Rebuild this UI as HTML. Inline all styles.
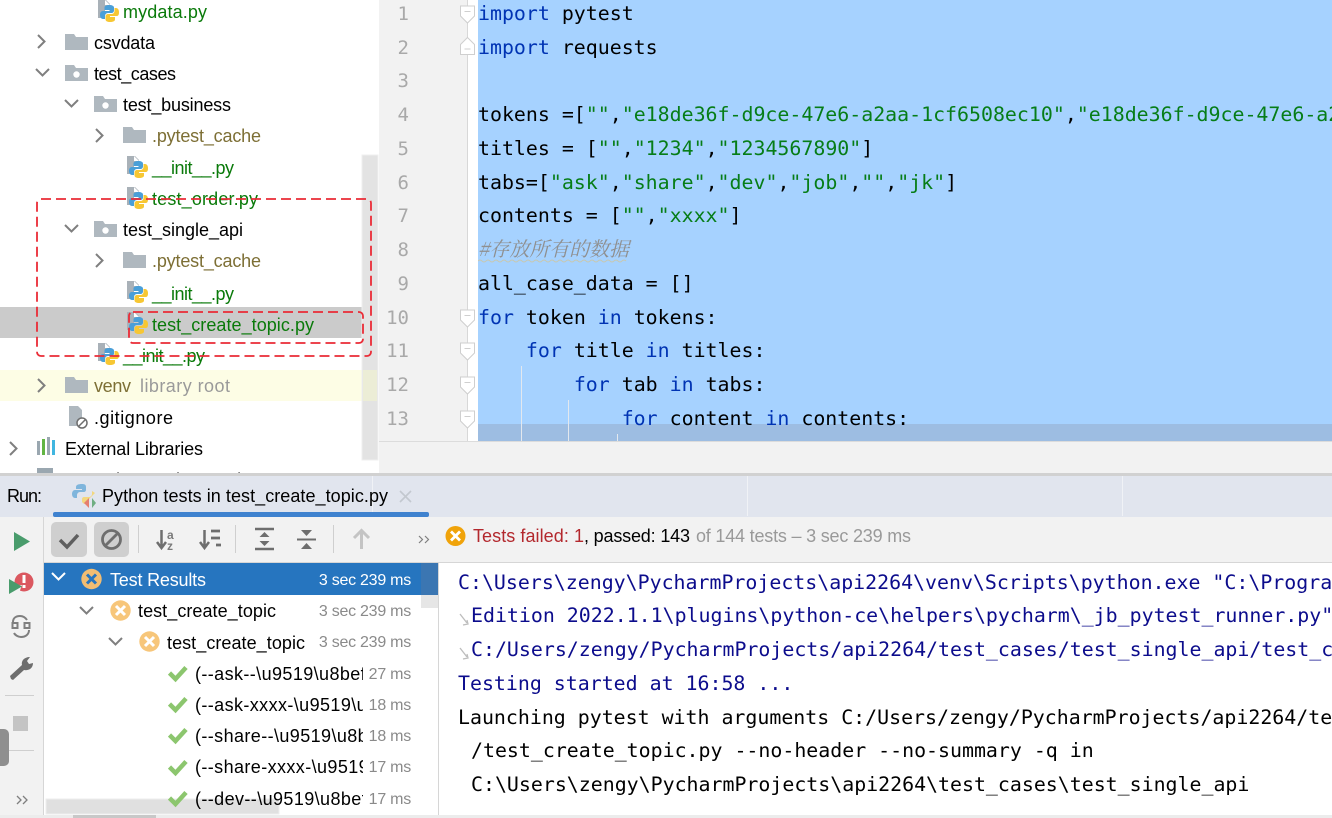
<!DOCTYPE html>
<html><head><meta charset="utf-8"><style>
html,body{margin:0;padding:0;background:#fff;overflow:hidden}
svg{display:block}
.s{font-family:"Liberation Sans","Noto Sans CJK SC",sans-serif;font-size:18px}
.m{font-family:"DejaVu Sans Mono","Liberation Mono",monospace;font-size:19.9px;white-space:pre}
.g{fill:#0a7a0a}.k{fill:#000}.o{fill:#7d6f35}.c{fill:#0033b3}.t{fill:#067d17}
.n{fill:#a9a9a9;font-family:"DejaVu Sans Mono",monospace;font-size:19px;text-anchor:end}
.d{fill:#8a8a8a;font-size:16px;letter-spacing:-.25px;text-anchor:end}
.nm{letter-spacing:.4px}
.con{fill:#0c0c8c}
</style></head><body>
<svg width="1332" height="818" viewBox="0 0 1332 818" xmlns="http://www.w3.org/2000/svg">
<defs>
<g id="py"><path d="M3 3h8l4 4v5h-5v9H3z" fill="#a9b1b8"/><path d="M10 3l5 5h-5z" fill="#fff"/>
<path d="M14.500 8c-3 0-5 .8-5 2.500V13h5v1H8c-2 0-3 1.500-3 3.800S6 22 8 22h2v-3c0-1.500 1.300-3 3-3h3.500c1.300 0 2.500-1 2.500-2.500v-3C19 9 17 8 14.500 8z" fill="#4a9fd8"/>
<path d="M15 25c3 0 5-.8 5-2.500V20h-5v-1h6.500c2 0 2.500-1.500 2.500-3.800S23 11 21 11h-1.500v3c0 1.500-1.300 3-3 3H13c-1.300 0-2.500 1-2.500 2.500v3c0 1.500 2 2.500 4.500 2.500z" fill="#f7c733"/></g>
<path id="fo" d="M0 18V2h9l2 3h12v13z" fill="#afb8bf"/>
<g id="fd"><use href="#fo"/><circle cx="11.500" cy="11.500" r="3.200" fill="#fff"/></g>
<path id="cr" d="M0 0l6.500 6.500L0 13" fill="none" stroke="#7f7f7f" stroke-width="2"/>
<path id="cd" d="M0 0l6.500 6.500L13 0" fill="none" stroke="#7f7f7f" stroke-width="2"/>
<g id="ok"><path d="M1.500 9l6 6L18 3.500" fill="none" stroke="#8cc66e" stroke-width="4.500"/></g>
<g id="fl"><path d="M0 0h14v10l-7 7-7-7z" fill="#fff" stroke="#cfcfcf"/><path d="M4 5.500h6" stroke="#cfcfcf"/></g>
<g id="fu"><path d="M0 17h14V7l-7-7-7 7z" fill="#fff" stroke="#cfcfcf"/><path d="M4 11.500h6" stroke="#cfcfcf"/></g>
<g id="wf"><circle cx="10.500" cy="10.500" r="10.200" fill="#f7c67a"/><path d="M6 6l9 9M15 6l-9 9" stroke="#fff" stroke-width="3"/></g>
<clipPath id="cTree"><rect x="0" y="0" width="378" height="473"/></clipPath>
<clipPath id="cCode"><rect x="478" y="0" width="854" height="441"/></clipPath>
<clipPath id="cName"><rect x="44" y="600" width="319" height="214"/></clipPath>
<clipPath id="cCon"><rect x="440" y="563" width="892" height="252"/></clipPath>
</defs>

<rect width="1332" height="818" fill="#fff"/>
<!-- project tree -->
<rect x="0" y="307" width="362" height="31" fill="#cbcbcb"/>
<rect x="0" y="370" width="377" height="31" fill="#fdfde5"/>
<rect x="362" y="155" width="16" height="305" fill="#e3e3e3" stroke="#efefef"/>
<rect x="363" y="370" width="14" height="31" fill="#ecedd6"/>
<g clip-path="url(#cTree)">
<use href="#py" x="95" y="-3"/><text class="s g" x="123" y="18" textLength="84">mydata.py</text>
<use href="#cr" x="38" y="35"/><use href="#fo" x="65" y="32"/><text class="s k" x="94" y="49" textLength="61">csvdata</text>
<use href="#cd" x="36" y="69"/><use href="#fd" x="65" y="63"/><text class="s k" x="94" y="80" textLength="82">test_cases</text>
<use href="#cd" x="65" y="100"/><use href="#fd" x="94" y="94"/><text class="s k" x="123" y="111" textLength="108">test_business</text>
<use href="#cr" x="96" y="129"/><use href="#fo" x="123" y="125"/><text class="s o" x="152" y="142" textLength="109">.pytest_cache</text>
<use href="#py" x="124" y="153"/><text class="s g" x="152" y="174" textLength="82">__init__.py</text>
<use href="#py" x="124" y="184"/><text class="s g" x="152" y="205" textLength="106">test_order.py</text>
<use href="#cd" x="65" y="225"/><use href="#fd" x="94" y="219"/><text class="s k" x="123" y="236" textLength="120">test_single_api</text>
<use href="#cr" x="96" y="254"/><use href="#fo" x="123" y="250"/><text class="s o" x="152" y="267" textLength="109">.pytest_cache</text>
<use href="#py" x="124" y="278"/><text class="s g" x="152" y="300" textLength="82">__init__.py</text>
<use href="#py" x="124" y="309"/><text class="s g" x="152" y="331" textLength="162">test_create_topic.py</text>
<use href="#py" x="95" y="340"/><text class="s g" x="123" y="362" textLength="82">__init__.py</text>
<use href="#cr" x="38" y="379"/><use href="#fo" x="65" y="375"/><text class="s o" x="94" y="392" textLength="37">venv</text><text class="s" fill="#9a9a9a" x="140" y="392" textLength="90">library root</text>
<path d="M69 406h9l4 4v16H69z" fill="#afb8bf"/><circle cx="82" cy="423" r="5" fill="#fff" stroke="#6e6e6e" stroke-width="1.500"/><path d="M79 426l6-6" stroke="#6e6e6e" stroke-width="1.500"/><text class="s k" x="94" y="424" textLength="79">.gitignore</text>
<use href="#cr" x="10" y="442"/><rect x="37" y="441" width="3" height="14" fill="#9aa7b0"/><rect x="42" y="439" width="3" height="16" fill="#62b543"/><rect x="47" y="437" width="3" height="18" fill="#9aa7b0"/><rect x="52" y="440" width="3" height="15" fill="#40b6e0"/><text class="s k" x="65" y="455" textLength="138">External Libraries</text>
<rect x="37" y="468" width="16" height="12" fill="#9aa7b0"/><text class="s k" x="65" y="486">Scratches and Consoles</text>
</g>
<rect x="37" y="199" width="334" height="157" rx="4" fill="none" stroke="#ea2b36" stroke-width="1.800" stroke-dasharray="10 5"/>
<rect x="129" y="312" width="234" height="31" rx="4" fill="none" stroke="#ea2b36" stroke-width="1.800" stroke-dasharray="10 5"/>

<!-- editor -->
<rect x="379" y="0" width="88" height="473" fill="#f2f2f2"/>
<rect x="379" y="441" width="953" height="32" fill="#f2f2f2"/>
<rect x="467" y="0" width="1" height="441" fill="#d8d8d8"/>
<rect x="478" y="0" width="854" height="424" fill="#a6d2ff"/>
<rect x="478" y="424" width="854" height="17" fill="#9dbde2"/>
<rect x="379" y="441" width="953" height="1" fill="#dcdcdc"/>
<path d="M521.500 366V441M568.500 400V441M617.500 434V441" stroke="#e3e8ee" fill="none"/>
<use href="#fl" x="460.500" y="6"/><use href="#fu" x="460.500" y="37.500"/>
<use href="#fl" x="460.500" y="310"/><use href="#fl" x="460.500" y="343"/><use href="#fl" x="460.500" y="377"/><use href="#fl" x="460.500" y="411"/>
<text class="n" x="409" y="20">1</text><text class="n" x="409" y="54">2</text><text class="n" x="409" y="87">3</text><text class="n" x="409" y="121">4</text><text class="n" x="409" y="155">5</text><text class="n" x="409" y="189">6</text><text class="n" x="409" y="222">7</text><text class="n" x="409" y="256">8</text><text class="n" x="409" y="290">9</text><text class="n" x="409" y="324">10</text><text class="n" x="409" y="357">11</text><text class="n" x="409" y="391">12</text><text class="n" x="409" y="425">13</text>
<g clip-path="url(#cCode)">
<text class="m k" x="478" y="20"><tspan class="c">import</tspan> pytest</text>
<text class="m k" x="478" y="54"><tspan class="c">import</tspan> requests</text>
<text class="m k" x="478" y="121">tokens =[<tspan class="t">""</tspan>,<tspan class="t">"e18de36f-d9ce-47e6-a2aa-1cf6508ec10"</tspan>,<tspan class="t">"e18de36f-d9ce-47e6-a2aa-1cf6508ec10"</tspan></text>
<text class="m k" x="478" y="155">titles = [<tspan class="t">""</tspan>,<tspan class="t">"1234"</tspan>,<tspan class="t">"1234567890"</tspan>]</text>
<text class="m k" x="478" y="189">tabs=[<tspan class="t">"ask"</tspan>,<tspan class="t">"share"</tspan>,<tspan class="t">"dev"</tspan>,<tspan class="t">"job"</tspan>,<tspan class="t">""</tspan>,<tspan class="t">"jk"</tspan>]</text>
<text class="m k" x="478" y="222">contents = [<tspan class="t">""</tspan>,<tspan class="t">"xxxx"</tspan>]</text>
<text x="478" y="256" fill="#8f8f8f" font-style="italic" font-size="20" font-family="'Noto Serif CJK SC','Noto Sans CJK SC',serif" textLength="151">#存放所有的数据</text>
<path d="M478 261q2 -2 4 0t4 0 4 0 4 0 4 0 4 0 4 0 4 0 4 0 4 0 4 0 4 0 4 0 4 0 4 0 4 0 4 0 4 0 4 0 4 0 4 0 4 0 4 0 4 0 4 0 4 0 4 0 4 0 4 0 4 0 4 0 4 0 4 0 4 0 4 0 4 0 4 0" fill="none" stroke="#c8c8b0" stroke-width=".9"/>
<text class="m k" x="478" y="290">all_case_data = []</text>
<text class="m k" x="478" y="324"><tspan class="c">for</tspan> token <tspan class="c">in</tspan> tokens:</text>
<text class="m k" x="478" y="357">    <tspan class="c">for</tspan> title <tspan class="c">in</tspan> titles:</text>
<text class="m k" x="478" y="391">        <tspan class="c">for</tspan> tab <tspan class="c">in</tspan> tabs:</text>
<text class="m k" x="478" y="425">            <tspan class="c">for</tspan> content <tspan class="c">in</tspan> contents:</text>
</g>

<!-- run tab bar -->
<rect x="0" y="473" width="1332" height="3" fill="#d1d1d1"/>
<rect x="0" y="476" width="1332" height="41" fill="#e1e5ee"/>
<path d="M372.500 476V512M747.500 476V516M1122.500 476V516" stroke="#f0f2f6"/>
<rect x="53" y="512" width="376" height="5" rx="2" fill="#3f82cf"/>
<text class="s k" x="7" y="502" textLength="35">Run:</text>
<path d="M82 484c-4 0-6 1-6 3v2h6v1h-7c-2 0-3 2-3 4s1 4 3 4h2v-3c0-1 1-3 3-3h4c1 0 2-1 2-2v-3c0-2-1-3-4-3z" fill="#7fb5dc"/><path d="M92 491v3c0 2-2 3-3 3h-5c-1 0-2 1-2 2v2c0 2 2 3 4 3l4-6 5-5z" fill="#f3d77e"/><path d="M84 503l5-5v10z" fill="#e57f70"/><path d="M92 498l4 5-4 5z" fill="#6fae82"/>
<text class="s k" x="102" y="502" textLength="286">Python tests in test_create_topic.py</text>
<path d="M400 491l11 11M411 491l-11 11" stroke="#c3c8cf" stroke-width="1.600"/>

<!-- left toolbar + toolbar -->
<rect x="0" y="517" width="44" height="298" fill="#f2f2f2"/>
<rect x="44" y="517" width="1288" height="46" fill="#f2f2f2"/>
<rect x="43" y="517" width="1" height="298" fill="#d6d6d6"/>
<rect x="440" y="562" width="892" height="1" fill="#d6d6d6"/>
<rect x="44" y="562" width="396" height="1" fill="#d6d6d6"/>
<path d="M14 532l16 9.500-16 9.500z" fill="#499c6c"/>
<circle cx="24" cy="582" r="9.500" fill="#db5860"/><rect x="22.500" y="575" width="3" height="8" fill="#fff"/><rect x="22.500" y="585" width="3" height="3" fill="#fff"/><path d="M13 586l9-1-3 8z" fill="#f2f2f2"/><path d="M9 579l13 7.500-13 7.500z" fill="#499c6c"/>
<g fill="none" stroke="#7f7f7f" stroke-width="2"><path d="M13 622c0-4 3-6 7-6 3 0 5 1 7 4"/><path d="M29 630c0 4-3 7-8 7-3 0-6-2-7-4"/><rect x="12.500" y="623" width="5" height="5"/><rect x="24.500" y="623" width="5" height="5"/></g>
<path d="M11 679l-1-3 12-11c-1-4 2-8 8-8l-3 4 2 3 4-1c0 5-4 8-9 7l-11 10z" fill="#6e6e6e"/>
<rect x="5" y="695" width="29" height="1" fill="#cfcfcf"/>
<rect x="13" y="716" width="15" height="15" fill="#c4c4c4"/>
<rect x="5" y="750" width="29" height="1" fill="#cfcfcf"/>
<rect x="-6" y="729" width="15" height="37" rx="5" fill="#8f8f8f"/>
<path d="M17 796l4 4-4 4M23 796l4 4-4 4" fill="none" stroke="#7f7f7f" stroke-width="1.300"/>

<rect x="51" y="522" width="36" height="35" rx="5" fill="#cfcfcf"/>
<rect x="94" y="522" width="35" height="35" rx="5" fill="#cfcfcf"/>
<path d="M60 540l7 7 11-12" fill="none" stroke="#5f5f5f" stroke-width="3.500"/>
<circle cx="111.500" cy="539.500" r="9" fill="none" stroke="#6e6e6e" stroke-width="2.800"/><path d="M105 546l13-13" stroke="#6e6e6e" stroke-width="2.800"/>
<rect x="138" y="525" width="1" height="28" fill="#cfcfcf"/>
<path d="M161.500 530v17M157 542l4.500 6 4.500-6" fill="none" stroke="#6e6e6e" stroke-width="2.500"/>
<text x="167" y="539" font-size="12" font-weight="bold" fill="#7a7a7a" font-family="Liberation Sans,sans-serif">a</text><text x="167" y="550" font-size="12" font-weight="bold" fill="#7a7a7a" font-family="Liberation Sans,sans-serif">z</text>
<path d="M204.500 530v17M200 542l4.500 6 4.500-6" fill="none" stroke="#6e6e6e" stroke-width="2.500"/>
<path d="M211 531h9M211 538h9M216 545h5" stroke="#6e6e6e" stroke-width="2.800"/>
<rect x="235" y="525" width="1" height="28" fill="#cfcfcf"/>
<path d="M255 529h19M255 549h19" stroke="#6e6e6e" stroke-width="2.500"/><path d="M264.500 532l5 5h-10zM264.500 546l5-5h-10z" fill="#6e6e6e"/>
<path d="M297 539.500h19" stroke="#6e6e6e" stroke-width="2"/><path d="M301 530h11l-5.500 6zM301 549h11l-5.500-6z" fill="#6e6e6e"/>
<rect x="333" y="525" width="1" height="28" fill="#cfcfcf"/>
<path d="M361.500 549v-18M354 538l7.500-7.500L369 538" fill="none" stroke="#c4c4c4" stroke-width="3"/>
<path d="M419 536l3.500 3.500-3.500 3.500M425 536l3.500 3.500-3.500 3.500" fill="none" stroke="#7f7f7f" stroke-width="1.200"/>

<!-- status -->
<circle cx="455.500" cy="536" r="10" fill="#f0a30a"/><path d="M451 531.500l9 9M460 531.500l-9 9" stroke="#fff" stroke-width="2.800"/>
<text class="s" x="473" y="542" fill="#b3282d" textLength="111">Tests failed: 1</text>
<text class="s k" x="584" y="542" textLength="106">, passed: 143</text>
<text class="s" x="696" y="542" fill="#999" textLength="215">of 144 tests – 3 sec 239 ms</text>

<!-- test tree -->
<rect x="44" y="563" width="394" height="32" fill="#2675bf"/>
<rect x="421" y="563" width="17" height="32" fill="#3b76b2"/>
<rect x="421" y="595" width="17" height="13" fill="#e6e6e6"/>
<path d="M52 573l6.500 6.500L65 573" fill="none" stroke="#fff" stroke-width="2"/>
<circle cx="91.500" cy="579" r="10.200" fill="#f2bd72"/><path d="M87 574.500l9 9M96 574.500l-9 9" stroke="#2675bf" stroke-width="3"/>
<text class="s" fill="#fff" x="110" y="586" textLength="96">Test Results</text><text class="s d" style="fill:#fff" x="411" y="585">3 sec 239 ms</text>
<use href="#cd" x="80" y="607"/><use href="#wf" x="110" y="600"/><text class="s k" x="138" y="617" textLength="138">test_create_topic</text><text class="s d" x="411" y="616">3 sec 239 ms</text>
<use href="#cd" x="109" y="638"/><use href="#wf" x="139" y="631"/><text class="s k" x="167" y="649" textLength="138">test_create_topic</text><text class="s d" x="411" y="647">3 sec 239 ms</text>
<rect x="46" y="799" width="233" height="15" fill="#e0e0e0" stroke="#eee"/>
<g clip-path="url(#cName)">
<text class="s k nm" x="195" y="680">(--ask--\u9519\u8bef\u8bef\u8bef</text>
<text class="s k nm" x="195" y="711">(--ask-xxxx-\u9519\u8bef</text>
<text class="s k nm" x="195" y="742">(--share--\u9519\u8bef\u8bef</text>
<text class="s k nm" x="195" y="773">(--share-xxxx-\u9519\u8bef</text>
<text class="s k nm" x="195" y="805">(--dev--\u9519\u8bef\u8bef</text>
</g>
<use href="#ok" x="168" y="664"/><use href="#ok" x="168" y="695"/><use href="#ok" x="168" y="726"/><use href="#ok" x="168" y="758"/><use href="#ok" x="168" y="789"/>
<text class="s d" x="411" y="679">27 ms</text><text class="s d" x="411" y="710">18 ms</text><text class="s d" x="411" y="741">18 ms</text><text class="s d" x="411" y="772">17 ms</text><text class="s d" x="411" y="804">17 ms</text>
<rect x="438" y="563" width="1" height="252" fill="#d6d6d6"/>
<rect x="0" y="815" width="1332" height="3" fill="#ececec"/><rect x="73" y="815" width="83" height="3" fill="#c8c8c8"/>

<!-- console -->
<g clip-path="url(#cCon)">
<text class="m con" x="458" y="589">C:\Users\zengy\PycharmProjects\api2264\venv\Scripts\python.exe "C:\Program Files</text>
<text class="m con" x="471" y="622">Edition 2022.1.1\plugins\python-ce\helpers\pycharm\_jb_pytest_runner.py" --path</text>
<text class="m con" x="471" y="656">C:/Users/zengy/PycharmProjects/api2264/test_cases/test_single_api/test_create</text>
<text class="m con" x="458" y="690">Testing started at 16:58 ...</text>
<text class="m k" x="458" y="724">Launching pytest with arguments C:/Users/zengy/PycharmProjects/api2264/test_cases</text>
<text class="m k" x="471" y="757">/test_create_topic.py --no-header --no-summary -q in</text>
<text class="m k" x="471" y="791">C:\Users\zengy\PycharmProjects\api2264\test_cases\test_single_api</text>
</g>
<path d="M460 614l7 9M463 625l5-1-1-4M460 648l7 9M463 659l5-1-1-4" fill="none" stroke="#bdbdbd" stroke-width="1.300"/>
</svg>
</body></html>
